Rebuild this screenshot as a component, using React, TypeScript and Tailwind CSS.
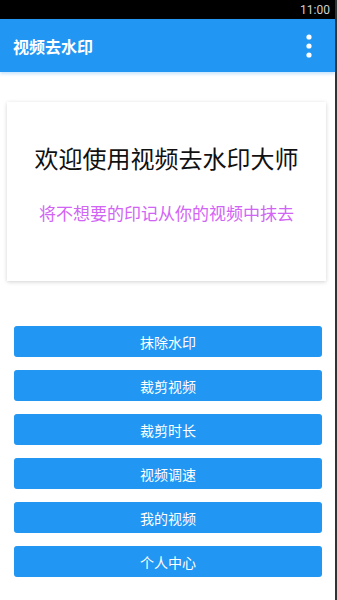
import React from 'react';

const actions = ['抹除水印', '裁剪视频', '裁剪时长', '视频调速', '我的视频', '个人中心'];

const App: React.FC = () => {
  return (
    <div
      className="flex h-[600px] w-[337px] bg-[#333333]"
      style={{ fontFamily: '"Noto Sans CJK SC", "Noto Sans", sans-serif' }}
    >
      <div className="flex w-[335px] flex-col bg-white">
        {/* Status bar */}
        <div className="flex h-[19px] items-center justify-end bg-black pr-[5px]">
          <span className="text-[12px] leading-none text-[#d0d0d0]" style={{ fontFamily: 'Roboto, sans-serif' }}>
            11:00
          </span>
        </div>

        {/* App bar */}
        <div className="flex h-[53px] items-center justify-between bg-[#2196F3] pl-[13px] pr-[23px] shadow-[0_2px_3px_rgba(33,150,243,0.25)]">
          <h1 className="text-[16px] font-bold leading-none text-white">视频去水印</h1>
          <svg width="6" height="24" viewBox="0 0 6 24" fill="white">
            <circle cx="3" cy="3" r="2.6" />
            <circle cx="3" cy="12" r="2.6" />
            <circle cx="3" cy="21" r="2.6" />
          </svg>
        </div>

        {/* Welcome card */}
        <div className="mx-[7px] mt-[30px] flex h-[179px] w-[319px] flex-col items-center bg-white pt-[42px] shadow-[0_1px_4px_rgba(0,0,0,0.18)]">
          <p className="text-[24px] leading-[28px] text-[#111]">欢迎使用视频去水印大师</p>
          <p className="mt-[31px] text-[17px] leading-[20px] text-[#d264f5]">将不想要的印记从你的视频中抹去</p>
        </div>

        {/* Action buttons */}
        <div className="ml-[14px] mt-[45px] flex w-[308px] flex-col gap-[13px]">
          {actions.map((label) => (
            <button
              key={label}
              className="flex h-[31px] items-center justify-center rounded-[3px] bg-[#2196F3] text-[14px] leading-none text-white"
            >
              {label}
            </button>
          ))}
        </div>
      </div>
    </div>
  );
};

export default App;
